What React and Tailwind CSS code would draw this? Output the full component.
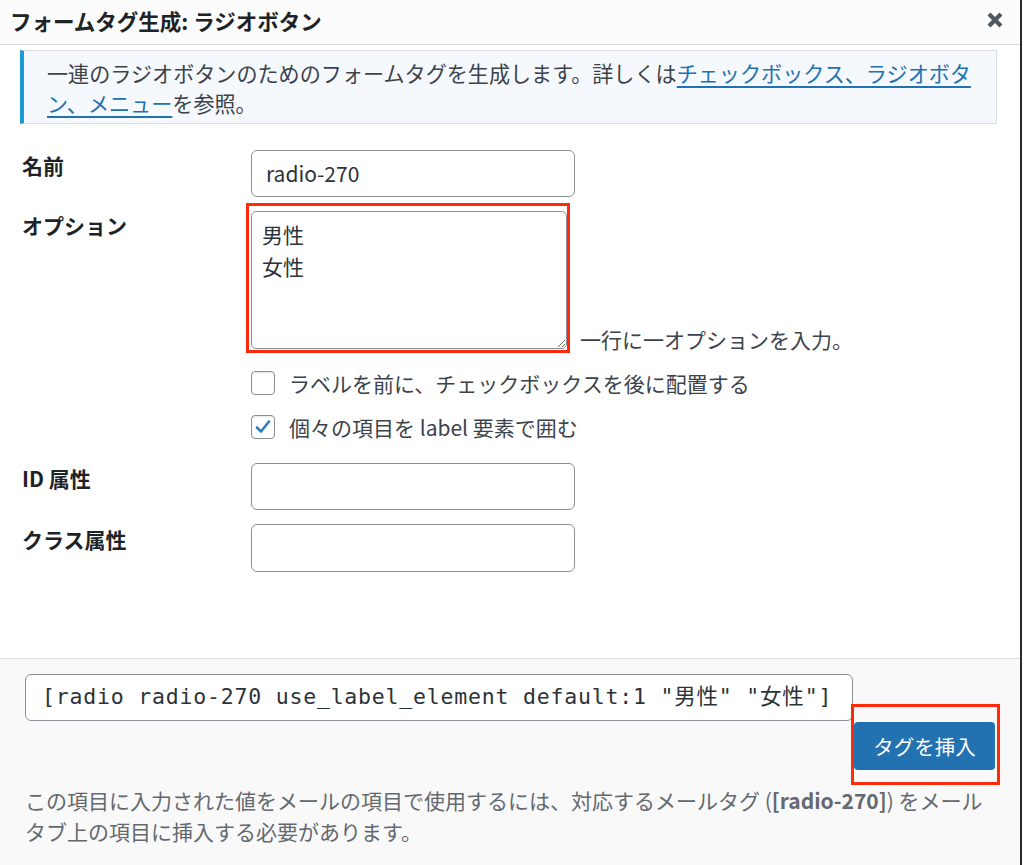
import React from "react";

function CloseIcon() {
  return (
    <svg width="18" height="18" viewBox="0 0 18 18" aria-hidden="true">
      <path d="M3 3 L15 15 M15 3 L3 15" stroke="#50575e" strokeWidth="4.2" strokeLinecap="butt" />
    </svg>
  );
}

function Checkbox({ checked }) {
  return (
    <span className="w-[24px] h-[24px] rounded-[4px] border border-[#8c8f94] bg-white flex items-center justify-center shrink-0 shadow-[inset_0_1px_2px_rgba(0,0,0,0.1)]">
      {checked && (
        <svg width="20" height="20" viewBox="0 0 20 20" aria-hidden="true">
          <path d="M4 10.5 L8 14.5 L16 4.5" fill="none" stroke="#2c7fc4" strokeWidth="2.6" strokeLinecap="round" strokeLinejoin="round" />
        </svg>
      )}
    </span>
  );
}

export default function App() {
  return (
    <div className="w-[1024px] h-[865px] bg-white flex font-['Noto_Sans_CJK_JP','Noto_Sans',sans-serif] text-[#3c434a] overflow-hidden">
      <div className="w-[1020px] h-full flex flex-col bg-white">
        {/* Header */}
        <div className="h-[45px] shrink-0 bg-[#fcfcfc] border-b border-[#dcdcde] flex items-center justify-between pl-[10px] pr-[16px]">
          <h1 className="text-[21.5px] font-bold text-[#1d2327] leading-none -mt-[2px]">フォームタグ生成: ラジオボタン</h1>
          <div className="-mt-[5px]">
            <CloseIcon />
          </div>
        </div>

        {/* Body */}
        <div className="flex-1 flex flex-col">
          <div className="ml-[20px] mr-[23px] mt-[5px] h-[74px] bg-[#f5f9fd] border border-[#dcdcde] border-l-[4px] border-l-[#1a9bd5] pl-[23px] pt-[7px]">
            <p className="text-[21.1px] leading-[30px] whitespace-nowrap">
              一連のラジオボタンのためのフォームタグを生成します。詳しくは
              <a className="text-[#2271b1] underline underline-offset-[4px] decoration-[1.5px]">
                チェックボックス、ラジオボタ
                <br />
                ン、メニュー
              </a>
              を参照。
            </p>
          </div>

          <div className="pl-[22px] mt-[26px] grid grid-cols-[229px_1fr] text-[21px]">
            {/* 名前 */}
            <div className="font-bold text-[#1d2327] leading-[30px]">名前</div>
            <div>
              <div className="w-[324px] h-[47px] rounded-[6px] border border-[#8c8f94] bg-white flex items-center pl-[14px] text-[#2c3338] text-[21px]">
                radio-270
              </div>
            </div>

            {/* オプション */}
            <div className="font-bold text-[#1d2327] leading-[30px] mt-[13px]">オプション</div>
            <div className="mt-[14px]">
              <div className="flex items-end">
                <div className="relative">
                  <textarea
                    readOnly
                    defaultValue={"男性\n女性"}
                    className="block w-[316px] h-[138px] rounded-[5px] border border-[#8c8f94] bg-white pl-[10px] pt-[6px] text-[21px] leading-[32px] text-[#2c3338] outline-none font-['Noto_Sans_CJK_JP',sans-serif]"
                  />
                  <div className="absolute left-[-5px] top-[-8px] right-[-3px] bottom-[-4px] border-[3px] border-[#ff2a0a] pointer-events-none" />
                </div>
                <span className="ml-[13px] leading-[24px] mb-[-2px] whitespace-nowrap">一行に一オプションを入力。</span>
              </div>

              <div className="flex items-center mt-[22px] h-[24px]">
                <Checkbox />
                <span className="ml-[14px] leading-[24px]">ラベルを前に、チェックボックスを後に配置する</span>
              </div>
              <div className="flex items-center mt-[20px] h-[24px]">
                <Checkbox checked />
                <span className="ml-[14px] leading-[24px]">個々の項目を label 要素で囲む</span>
              </div>
            </div>

            {/* ID 属性 */}
            <div className="font-bold text-[#1d2327] leading-[30px] mt-[24px]">ID 属性</div>
            <div className="mt-[24px]">
              <div className="w-[324px] h-[47px] rounded-[6px] border border-[#8c8f94] bg-white" />
            </div>

            {/* クラス属性 */}
            <div className="font-bold text-[#1d2327] leading-[30px] mt-[14px]">クラス属性</div>
            <div className="mt-[14px]">
              <div className="w-[324px] h-[48px] rounded-[6px] border border-[#8c8f94] bg-white" />
            </div>
          </div>
        </div>

        {/* Footer */}
        <div className="h-[207px] shrink-0 bg-[#f9f9f9] border-t border-[#dcdcde] pl-[25px] pr-[25px] pt-[15px]">
          <div className="w-[828px] h-[47px] rounded-[6px] border border-[#8c8f94] bg-white flex items-center pl-[16px] font-['DejaVu_Sans_Mono','Noto_Sans_CJK_JP',monospace] text-[21.5px] tracking-[0.8px] text-[#2c3338] whitespace-nowrap overflow-hidden">
            [radio radio-270 use_label_element default:1 "男性" "女性"]
          </div>
          <div className="flex justify-end mt-[1px]">
            <div className="relative">
              <div className="w-[141px] h-[48px] rounded-[4px] bg-[#2271b1] text-white text-[20.5px] flex items-center justify-center">
                タグを挿入
              </div>
              <div className="absolute left-[-3px] top-[-18px] right-[-5px] bottom-[-15px] border-[3px] border-[#ff2a0a] pointer-events-none" />
            </div>
          </div>
          <p className="mt-[15px] text-[21px] leading-[31px] text-[#646970] whitespace-nowrap">
            この項目に入力された値をメールの項目で使用するには、対応するメールタグ (<strong className="font-bold">[radio-270]</strong>) をメール
            <br />
            タブ上の項目に挿入する必要があります。
          </p>
        </div>
      </div>
      <div className="w-[2px] h-full bg-[#2a2a2a]" />
      <div className="w-[2px] h-full bg-white" />
    </div>
  );
}
